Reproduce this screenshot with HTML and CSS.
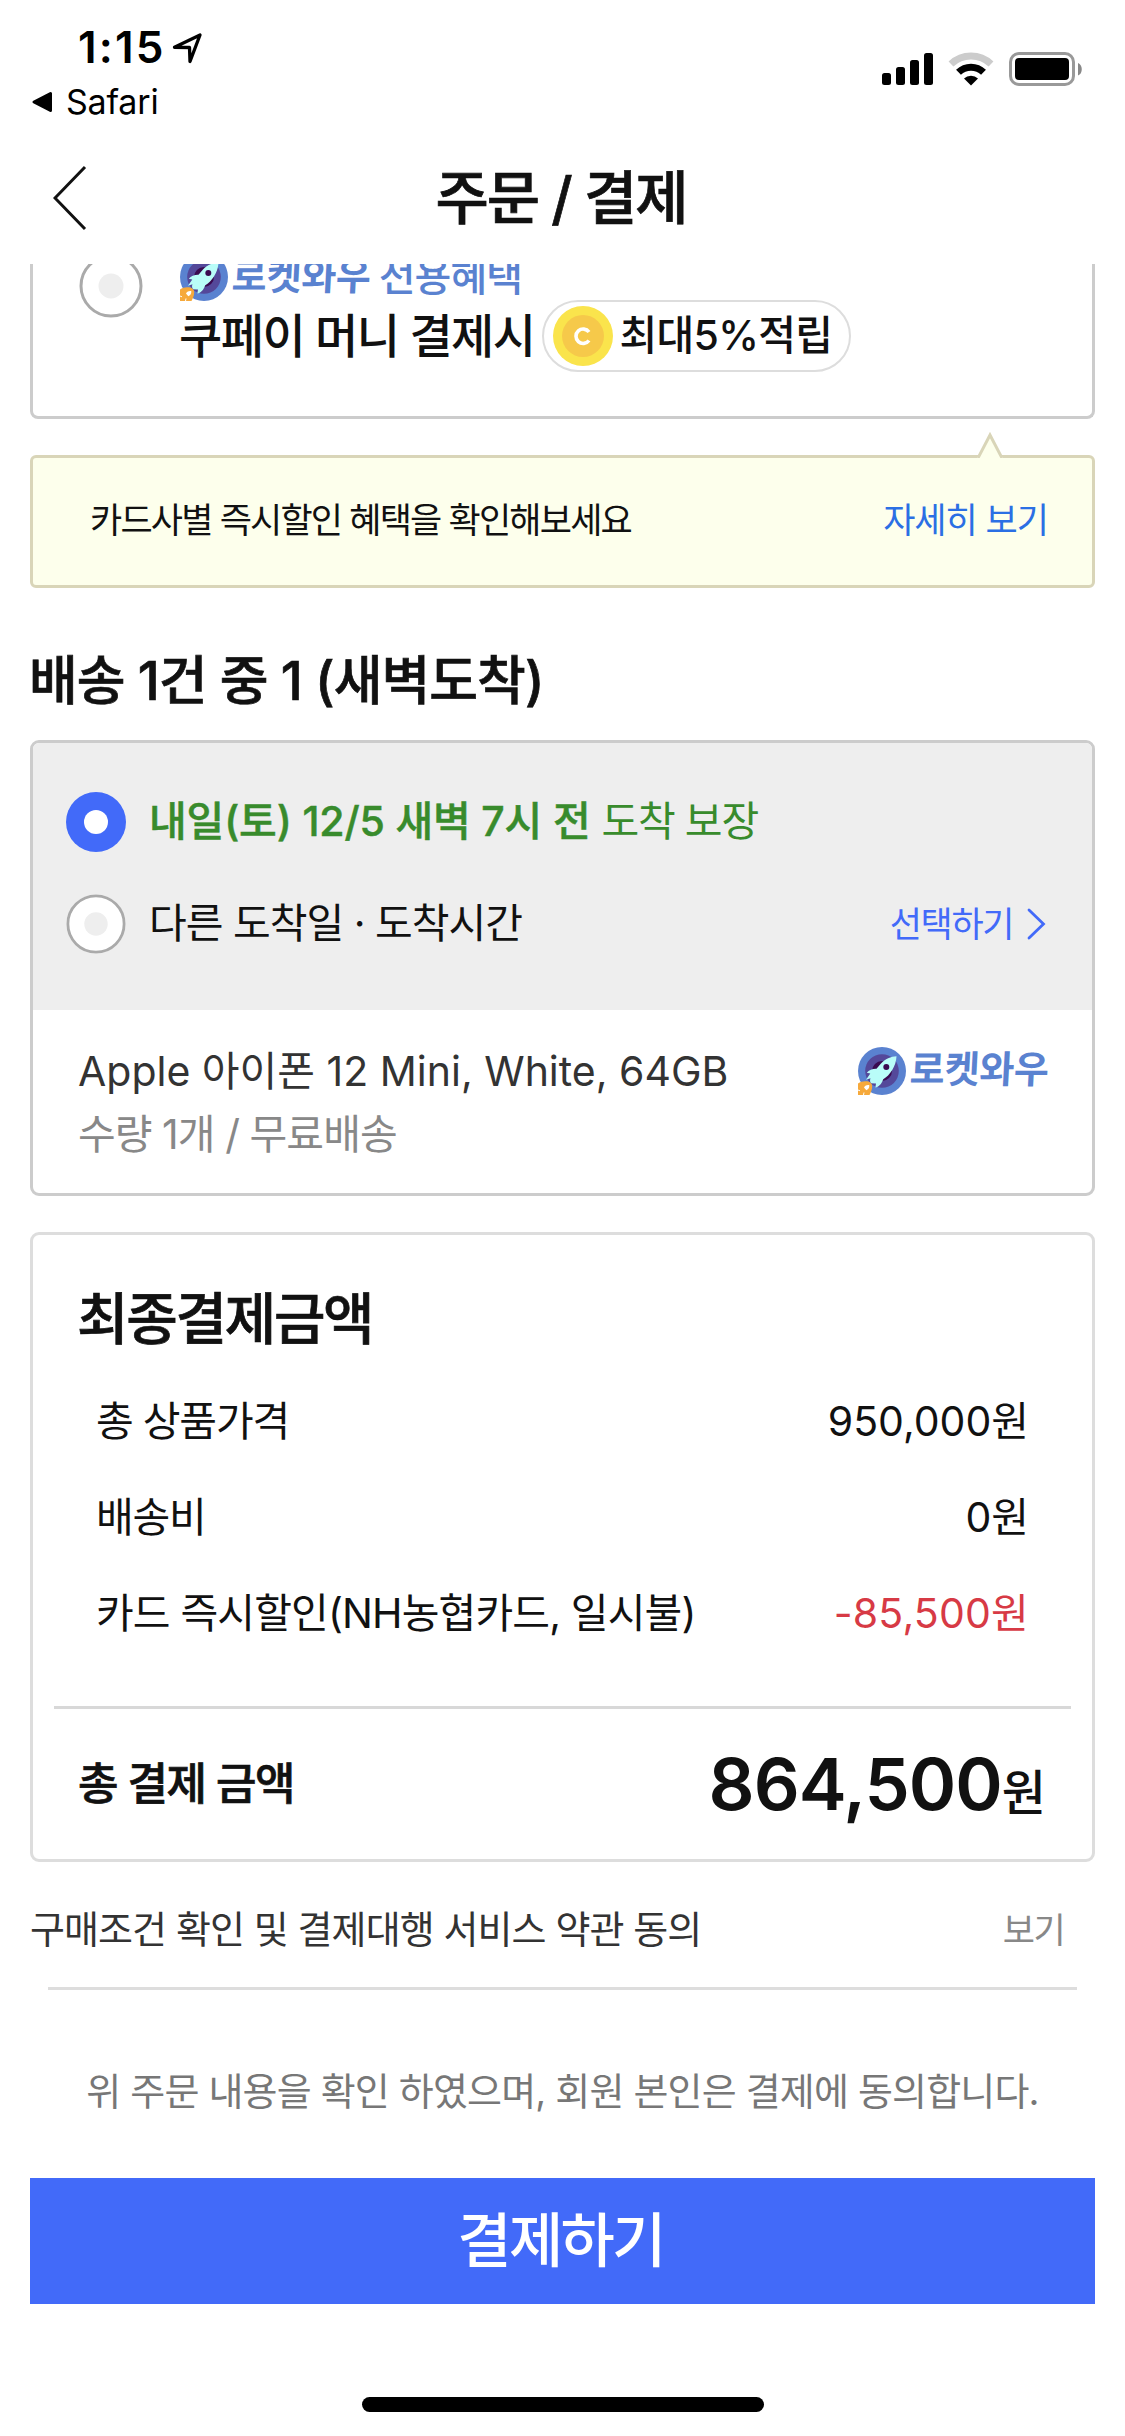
FILE: index.html
```html
<!DOCTYPE html>
<html lang="ko">
<head>
<meta charset="utf-8">
<title>주문 / 결제</title>
<link rel="stylesheet" href="styles.css">
</head>
<body>
<svg class="defs" aria-hidden="true">
  <symbol id="rocket" viewBox="0 0 48 48">
    <circle cx="24" cy="24" r="24" fill="#5a82d0"/>
    <circle cx="24" cy="24" r="16.8" fill="#54489a"/>
    <circle cx="24" cy="24" r="10" fill="#3a0a50"/>
    <path d="M38.500 9.300C33 9.600 27 12 23 16.600l-4.500 5.200c-3.700-.2-7.500 1.500-9.700 3.900l3.500.8-4.300 6.300 4.500-1.600c-.8 1.900-.5 3.800.5 5l5 .4-.6 3.900c3-.3 6.300-3.500 7.800-8.300C32 28.500 38.200 19 38.500 9.300z" fill="#b9fdf8"/>
    <circle cx="28.300" cy="20" r="3" fill="#3a0a50"/>
    <path d="M0 36.500c2.500-1.800 5-2.500 8-2.300 3.500 0 6.300 2 6.200 5.200-.1 3.500-1.600 6-2.700 8.600H0z" fill="#f6a93b"/>
    <path d="M6 40.500c1.300-2 3.500-2.800 5.300-2.200.3 2.600-1.300 4.200-3 4.900z" fill="#fff"/>
    <path d="M0 43l2 .8M6 45.500L5.500 48" stroke="#fff" stroke-width="1" fill="none"/>
  </symbol>
  <symbol id="radio-off" viewBox="0 0 64 64">
    <circle cx="32" cy="32" r="31.500" fill="#fff"/>
    <circle cx="32" cy="32" r="30" fill="none" stroke="#aaa" stroke-width="3"/>
    <circle cx="32" cy="32" r="12.500" fill="#eee"/>
  </symbol>
</svg>

<header class="status">
  <div class="status-left">
    <div class="clock"><span>1:15</span>
      <svg width="34" height="34" viewBox="0 0 34 34"><path d="M3.500 17.300L29 5 19 31.500 18.500 17.500z" fill="none" stroke="#000" stroke-width="3.300" stroke-linejoin="round"/></svg>
    </div>
    <div class="back-app">
      <svg width="22" height="24" viewBox="0 0 22 24"><path d="M3 12L19.500 3.500v17z" stroke="#000" stroke-width="3" stroke-linejoin="round"/></svg>
      <span>Safari</span>
    </div>
  </div>
  <div class="status-right">
    <svg width="51" height="34" viewBox="0 0 51 34"><rect y="21" width="9" height="12" rx="2.500"/><rect x="14" y="15" width="9" height="18" rx="2.500"/><rect x="28" y="8" width="9" height="25" rx="2.500"/><rect x="42" y="1" width="9" height="32" rx="2.500"/></svg>
    <svg width="46" height="34" viewBox="0 0 46 34"><g fill="none"><path d="M3 12a29 29 0 0 1 40 0" stroke="#ccc" stroke-width="7"/><path d="M10.500 20.300a18 18 0 0 1 25 0" stroke="#000" stroke-width="7"/></g><path d="M23 33.500l-7-7a10 10 0 0 1 14 0z"/></svg>
    <svg width="74" height="34" viewBox="0 0 74 34"><rect x="1.500" y="1.500" width="63" height="31" rx="8.500" fill="none" stroke="#999" stroke-width="3"/><rect x="6" y="6" width="54" height="22" rx="4"/><path d="M69 11c5 1.500 5 11 0 12.500z" fill="#888"/></svg>
  </div>
</header>

<nav class="titlebar">
  <svg class="chevron-back" width="34" height="66" viewBox="0 0 34 66"><path d="M32 2L2 33l30 31" fill="none" stroke="#111" stroke-width="3"/></svg>
  <h1>주문 / 결제</h1>
</nav>

<main>
  <section class="card pay-option">
    <svg class="radio-top" width="64" height="64"><use href="#radio-off"/></svg>
    <div class="pay-body">
      <div class="benefit">
        <svg width="48" height="48"><use href="#rocket"/></svg>
        <span class="wow">로켓와우</span>
        <span class="benefit-text">전용혜택</span>
      </div>
      <div class="pay-line">
        <span>쿠페이 머니 결제시</span>
        <span class="pill">
          <svg width="60" height="60" viewBox="0 0 60 60"><circle cx="30" cy="30" r="30" fill="#fae44c"/><circle cx="30" cy="30" r="21" fill="#f6c94a"/><path d="M36 26a7.200 7.200 0 1 0 0 8.500" fill="none" stroke="#fff" stroke-width="3.600"/></svg>
          <span>최대5%적립</span>
        </span>
      </div>
    </div>
  </section>

  <section class="notice">
    <svg class="notice-tip" width="26" height="26" viewBox="0 0 26 26"><path d="M0 26L13 2l13 24z" fill="#fdffec"/><path d="M1 26L13 3l12 23" fill="none" stroke="#d9d5b8" stroke-width="3"/></svg>
    <span class="notice-text">카드사별 즉시할인 혜택을 확인해보세요</span>
    <a class="notice-link">자세히 보기</a>
  </section>

  <h2 class="ship-title">배송 1건 중 1 (새벽도착)</h2>

  <section class="ship">
    <div class="ship-options">
      <div class="ship-row">
        <svg width="60" height="60" viewBox="0 0 60 60"><circle cx="30" cy="30" r="30" fill="#426af9"/><circle cx="30" cy="30" r="12" fill="#fff"/></svg>
        <p class="eta"><b>내일(토) 12/5 새벽 7시 전</b><span>도착 보장</span></p>
      </div>
      <div class="ship-row">
        <svg width="60" height="60"><use href="#radio-off"/></svg>
        <p class="other">다른 도착일 · 도착시간</p>
        <a class="choose">선택하기<svg width="19" height="34" viewBox="0 0 19 34"><path d="M2 3l14.500 14L2 31" fill="none" stroke="#426af9" stroke-width="2.800" stroke-linecap="round"/></svg></a>
      </div>
    </div>
    <div class="product">
      <div class="product-top">
        <p class="product-name">Apple 아이폰 12 Mini, White, 64GB</p>
        <div class="wow-badge"><svg width="48" height="48"><use href="#rocket"/></svg><span class="wow">로켓와우</span></div>
      </div>
      <p class="qty">수량 1개 / 무료배송</p>
    </div>
  </section>

  <section class="card summary">
    <h3>최종결제금액</h3>
    <dl>
      <div class="line"><dt class="tight">총 상품가격</dt><dd>950,000원</dd></div>
      <div class="line"><dt class="tight">배송비</dt><dd>0원</dd></div>
      <div class="line"><dt>카드 즉시할인(NH농협카드, 일시불)</dt><dd class="minus">-85,500원</dd></div>
    </dl>
    <div class="total"><span class="total-label">총 결제 금액</span><span class="total-value">864,500<small>원</small></span></div>
  </section>

  <div class="terms"><span>구매조건 확인 및 결제대행 서비스 약관 동의</span><a>보기</a></div>
  <p class="agree">위 주문 내용을 확인 하였으며, 회원 본인은 결제에 동의합니다.</p>
  <button class="pay">결제하기</button>
</main>
<div class="home"></div>
</body>
</html>
```
FILE: styles.css
```css
* { box-sizing: border-box; }
body, h1, h2, h3, p, dl, dd { margin: 0; }
body {
  width: 1125px;
  height: 2436px;
  background: #fff;
  color: #111;
  font-family: Inter, "Noto Sans CJK KR", sans-serif;
  line-height: 1.2;
  white-space: nowrap;
  overflow: hidden;
}
svg { display: block; flex: none; }
.defs { position: absolute; width: 0; height: 0; }

/* Status bar */
.status { display: flex; justify-content: space-between; height: 132px; color: #000; }
.status-left { padding: 17px 0 0 31px; }
.clock { display: flex; align-items: center; height: 60px; padding-left: 47px; font-size: 44px; font-weight: 600; letter-spacing: 2.2px; gap: 5px; }
.back-app { display: flex; align-items: center; height: 40px; margin-top: 5px; font-size: 34px; letter-spacing: -.2px; gap: 13px; }
.status-right { display: flex; gap: 15px; padding: 52px 42px 0 0; }

/* Title bar */
.titlebar { display: grid; grid-template-columns: 150px 1fr 150px; align-items: center; height: 132px; }
.chevron-back { margin-left: 53px; }
h1, h2, h3, .total-label { -webkit-text-stroke: .7px currentColor; }
h1 { font-size: 58px; font-weight: 500; letter-spacing: -2.1px; text-align: center; line-height: 70px; padding-right: 3px; }

main { padding: 0 30px; }
.card { border: 3px solid #ccc; border-radius: 8px; }

/* Payment option, scrolled under the title bar */
.pay-option { display: flex; gap: 37px; height: 155px; padding-left: 46px; border-top: 0; border-radius: 0 0 8px 8px; overflow: hidden; }
.radio-top { margin-top: -10px; }
.pay-body { margin-top: -11px; }
.benefit { display: flex; align-items: center; height: 48px; color: #5a82d0; }
.wow { margin-left: 4px; font-size: 38px; font-weight: 700; letter-spacing: -.3px; color: #5a82d0; transform: skewX(-3deg); }
.benefit-text { margin-left: 8px; font-size: 40px; font-weight: 500; letter-spacing: -.9px; }
.pay-line { display: flex; align-items: center; height: 72px; margin: -1px 0 0 -1px; font-size: 47px; font-weight: 500; letter-spacing: -1.55px; gap: 8px; }
.pill { display: flex; align-items: center; width: 309px; height: 72px; padding-left: 9px; gap: 6px; border: 2px solid #ddd; border-radius: 36px; font-size: 41px; letter-spacing: -.7px; }

/* Card discount notice */
.notice { position: relative; display: flex; justify-content: space-between; align-items: center; height: 133px; margin-top: 36px; padding: 0 44px 3px 57px; border: 3px solid #d9d5b8; border-radius: 6px; background: #fdffec; font-size: 35px; }
.notice-tip { position: absolute; top: -26px; right: 89px; }
.notice-text { letter-spacing: -1.8px; }
.notice-link { letter-spacing: -1px; color: #2b6fe4; }

/* Shipping */
.ship-title { margin: 63px 0 29px -1px; font-size: 53px; font-weight: 500; letter-spacing: -.95px; line-height: 60px; }
.ship { height: 456px; border: 3px solid #ccc; border-radius: 9px; }
.ship-options { height: 267px; padding: 49px 46px 0 33px; background: #eee; border-radius: 6px 6px 0 0; }
.ship-row { display: flex; align-items: center; height: 60px; margin-bottom: 42px; gap: 23px; font-size: 41px; }
.eta { display: flex; gap: 11px; color: #388b2c; }
.eta b { font-weight: 500; letter-spacing: -.15px; -webkit-text-stroke: .5px currentColor; }
.eta span { letter-spacing: -1.2px; }
.other { letter-spacing: -1px; }
.choose { display: flex; align-items: center; gap: 14px; margin-left: auto; color: #426af9; font-size: 35px; letter-spacing: -1.4px; }
.product { padding: 30px 45px 0; font-size: 41px; line-height: 62px; color: #333; }
.product-top { display: flex; justify-content: space-between; align-items: center; height: 62px; }
.wow-badge { display: flex; align-items: center; margin-right: -2px; line-height: 44px; }
.wow-badge .wow { padding-bottom: 4px; }
.qty { margin-top: 1px; letter-spacing: -.95px; color: #888; }

/* Payment summary */
.summary { height: 630px; margin-top: 36px; padding: 49px 21px 0; border-color: #ddd; border-radius: 9px; }
h3 { padding-left: 23px; font-size: 56px; font-weight: 500; letter-spacing: -2.3px; line-height: 70px; }
dl { margin-top: 20px; padding: 0 42px; font-size: 41px; }
.line { display: flex; justify-content: space-between; align-items: center; height: 96px; }
dt { letter-spacing: -.85px; }
.tight { letter-spacing: -1.2px; }
.minus { color: #d73a45; letter-spacing: .2px; }
.total { display: flex; justify-content: space-between; align-items: center; height: 153px; margin-top: 44px; padding: 0 25px 0 24px; border-top: 3px solid #d8d8d8; }
.total-label { font-size: 44px; font-weight: 500; letter-spacing: -1.4px; }
.total-value { font-size: 72px; font-weight: 600; letter-spacing: -1px; line-height: 90px; }
.total-value small { font-size: 48px; font-weight: 500; letter-spacing: 0; line-height: 1; }

/* Terms and action */
.terms { display: flex; justify-content: space-between; align-items: center; height: 128px; margin: 0 18px; padding-top: 10px; border-bottom: 3px solid #ddd; font-size: 38px; letter-spacing: -.92px; color: #333; }
.terms span { margin-left: -18px; }
.terms a { margin-right: 13px; font-size: 35px; letter-spacing: -1.6px; color: #888; }
.agree { margin-top: 76px; font-size: 38px; letter-spacing: -.83px; line-height: 50px; color: #777; text-align: center; }
.pay { display: block; width: 100%; height: 126px; margin-top: 62px; padding: 0 4px 0 0; border: 0; background: #426af9; color: #fff; font: 500 59px/126px Inter, "Noto Sans CJK KR", sans-serif; letter-spacing: -2.7px; }
.home { width: 402px; height: 15px; margin: 93px auto 0; border-radius: 8px; background: #000; }
```
